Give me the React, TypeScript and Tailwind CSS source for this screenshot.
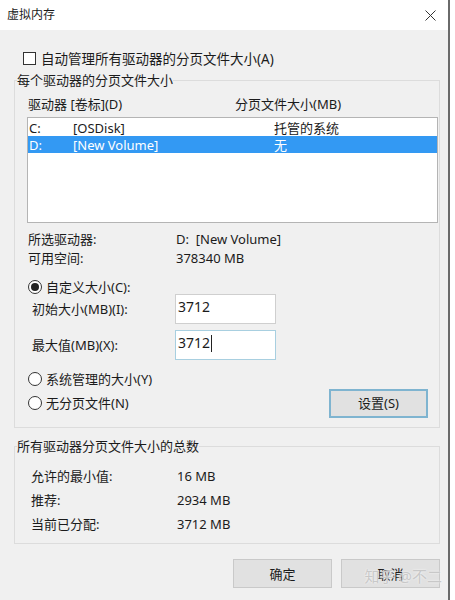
const FONT = "font-['Noto_Sans','Noto_Sans_CJK_SC',sans-serif]";

function Radio({ checked, label }: { checked?: boolean; label: string }) {
  return (
    <div className="flex items-center">
      <span className="flex h-[14px] w-[14px] items-center justify-center rounded-full border border-[#333] bg-white">
        {checked && <span className="h-[8px] w-[8px] rounded-full bg-[#222]" />}
      </span>
      <span className="ml-[4px]">{label}</span>
    </div>
  );
}

function Button({ label, focused }: { label: string; focused?: boolean }) {
  return (
    <div
      className={
        focused
          ? "flex h-[29px] w-[99px] items-center justify-center border-2 border-[#7fb4d0] bg-[#e1e1e1]"
          : "flex h-[29px] w-[99px] items-center justify-center border border-[#c9c9c9] bg-[#e1e1e1]"
      }
    >
      {label}
    </div>
  );
}

export default function App() {
  return (
    <div className={`${FONT} w-[455px] h-[600px] bg-white text-[13px] leading-[18px] text-[#1b1b1b]`}>
      <div className="flex h-[600px] w-[450px] flex-col border-r-2 border-[#6a6a6a]">
        {/* title bar */}
        <div className="flex h-[30px] items-center justify-between bg-white pl-[7px] pr-[12px]">
          <span className="text-[12px]">虚拟内存</span>
          <svg width="11" height="11" viewBox="0 0 11 11">
            <path d="M0.5 0.5 L10.5 10.5 M10.5 0.5 L0.5 10.5" stroke="#333" strokeWidth="1" />
          </svg>
        </div>

        <div className="relative flex-1 bg-[#f0f0f0] pl-[14px] pr-[8px]">
          {/* checkbox */}
          <div className="mt-[22px] flex h-[13px] items-center pl-[9px]">
            <span className="h-[13px] w-[13px] border border-[#333] bg-white" />
            <span className="ml-[5px] text-[13.5px]">自动管理所有驱动器的分页文件大小(A)</span>
          </div>

          {/* group 1 */}
          <fieldset className="mt-[6px] w-[426px] border border-[#dcdcdc] pb-[9px]">
            <legend className="ml-[2px] px-0">每个驱动器的分页文件大小</legend>
            <div className="mt-[6px] flex h-[18px] pl-[13px]">
              <span className="w-[207px]">驱动器 [卷标](D)</span>
              <span>分页文件大小(MB)</span>
            </div>
            <div className="ml-[12px] mt-[4px] h-[106px] w-[411px] border border-[#b4b4b4] bg-white pt-[1px]">
              <div className="flex h-[17px] items-center pl-[1px]">
                <span className="w-[44px]">C:</span>
                <span className="w-[201px]">[OSDisk]</span>
                <span>托管的系统</span>
              </div>
              <div className="flex h-[17px] items-center bg-[#3399f3] pl-[1px] text-white">
                <span className="w-[44px]">D:</span>
                <span className="w-[201px]">[New Volume]</span>
                <span>无</span>
              </div>
            </div>

            <div className="mt-[6px] flex h-[19px] items-center pl-[13px]">
              <span className="w-[148px]">所选驱动器:</span>
              <span>D:&nbsp;&nbsp;[New Volume]</span>
            </div>
            <div className="flex h-[19px] items-center pl-[13px]">
              <span className="w-[148px]">可用空间:</span>
              <span>378340 MB</span>
            </div>

            <div className="mt-[12px] flex h-[15px] items-center pl-[13px]">
              <Radio checked label="自定义大小(C):" />
            </div>
            <div className="flex h-[30px] items-center pl-[17px]">
              <span className="w-[143px]">初始大小(MB)(I):</span>
              <div className="flex h-[30px] w-[101px] items-start border border-[#cfcfcf] bg-white pl-[2px] pt-[3px] text-[14px]">
                3712
              </div>
            </div>
            <div className="mt-[6px] flex h-[30px] items-center pl-[17px]">
              <span className="w-[143px]">最大值(MB)(X):</span>
              <div className="flex h-[30px] w-[101px] items-start border border-[#a8cfe0] bg-white pl-[2px] pt-[3px] text-[14px]">
                3712<span className="ml-[1px] mt-[1px] h-[17px] w-[1px] bg-[#222]" />
              </div>
            </div>

            <div className="mt-[10px] flex h-[18px] items-center pl-[13px]">
              <Radio label="系统管理的大小(Y)" />
            </div>
            <div className="flex h-[30px] items-center justify-between pl-[13px] pr-[11px]">
              <Radio label="无分页文件(N)" />
              <Button focused label="设置(S)" />
            </div>
          </fieldset>

          {/* group 2 */}
          <fieldset className="mt-[9px] w-[426px] border border-[#dcdcdc] pb-[7px]">
            <legend className="ml-[2px] px-0">所有驱动器分页文件大小的总数</legend>
            <div className="mt-[9px] flex h-[24px] items-center pl-[16px]">
              <span className="w-[146px]">允许的最小值:</span>
              <span>16 MB</span>
            </div>
            <div className="flex h-[24px] items-center pl-[16px]">
              <span className="w-[146px]">推荐:</span>
              <span>2934 MB</span>
            </div>
            <div className="flex h-[24px] items-center pl-[16px]">
              <span className="w-[146px]">当前已分配:</span>
              <span>3712 MB</span>
            </div>
          </fieldset>

          {/* buttons */}
          <div className="mt-[15px] flex justify-end gap-[9px]">
            <Button label="确定" />
            <Button label="取消" />
          </div>

          <span className="absolute right-[6px] top-[537px] text-[15px] text-[#c8c8c8] [text-shadow:0_0_2px_#fff]">
            知乎 @不二
          </span>
        </div>
      </div>
    </div>
  );
}
